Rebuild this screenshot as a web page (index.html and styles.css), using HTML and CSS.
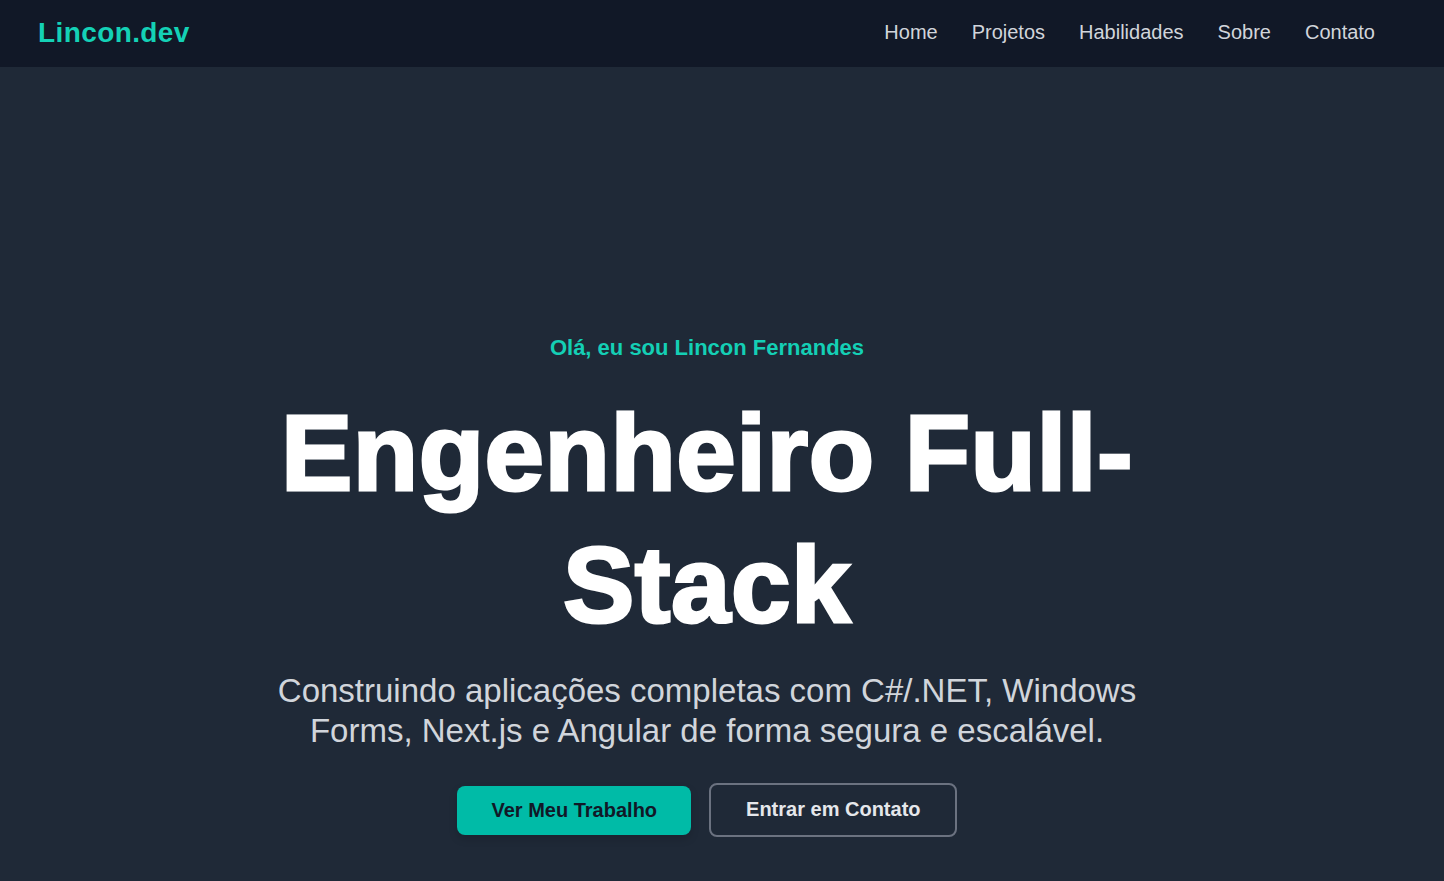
FILE: index.html
```html
<!DOCTYPE html>
<html lang="pt-BR">
<head>
<meta charset="utf-8">
<title>Lincon.dev</title>
<link rel="stylesheet" href="styles.css">
</head>
<body>
<header class="navbar">
  <a class="logo" href="#">Lincon.dev</a>
  <nav class="nav-links">
    <a href="#">Home</a>
    <a href="#">Projetos</a>
    <a href="#">Habilidades</a>
    <a href="#">Sobre</a>
    <a href="#">Contato</a>
  </nav>
</header>
<main class="hero">
  <div class="hero-inner">
    <p class="hello">Olá, eu sou Lincon Fernandes</p>
    <h1 class="title">Engenheiro Full-Stack</h1>
    <p class="lead">Construindo aplicações completas com C#/.NET, Windows Forms, Next.js e Angular de forma segura e escalável.</p>
    <div class="actions">
      <a class="btn btn-primary" href="#">Ver Meu Trabalho</a>
      <a class="btn btn-outline" href="#">Entrar em Contato</a>
    </div>
  </div>
</main>
</body>
</html>
```

FILE: styles.css
```css
* { box-sizing: border-box; }
html, body { margin: 0; padding: 0; }
body {
  background: #1f2937;
  font-family: "Liberation Sans", Arial, sans-serif;
  color: #ffffff;
  min-height: 881px;
}
a { text-decoration: none; }

.navbar {
  height: 67px;
  background: #111827;
  display: flex;
  align-items: center;
  justify-content: space-between;
  padding: 0 69px 0 38px;
}
.logo {
  color: #14d1b6;
  font-weight: 700;
  font-size: 28px;
  letter-spacing: 0.4px;
  line-height: 1;
  margin-top: -2px;
}
.nav-links {
  display: flex;
  gap: 34px;
  margin-top: -4px;
}
.nav-links a {
  color: #d1d5db;
  font-size: 20px;
  line-height: 1;
}

.hero {
  display: flex;
  justify-content: center;
  padding: 265px 30px 0 0;
}
.hero-inner {
  display: flex;
  flex-direction: column;
  align-items: center;
  text-align: center;
}
.hello {
  margin: 0;
  color: #14cfb5;
  font-weight: 700;
  font-size: 22px;
  line-height: 32px;
}
.title {
  margin: 23px 0 0;
  font-size: 107px;
  line-height: 132px;
  font-weight: 700;
  color: #ffffff;
  -webkit-text-stroke: 3px #ffffff;
  letter-spacing: 0.5px;
  width: 900px;
}
.lead {
  margin: 20px 0 0;
  max-width: 900px;
  color: #d1d5db;
  font-size: 33px;
  line-height: 40px;
}
.actions {
  margin-top: 32px;
  display: flex;
  align-items: center;
  gap: 18px;
}
.btn {
  font-weight: 700;
  font-size: 20px;
  line-height: 24px;
  border-radius: 8px;
}
.btn-primary {
  background: #00bba7;
  color: #111827;
  padding: 12px 34px 13px;
  box-shadow: 0 4px 8px rgba(0,0,0,0.15);
}
.btn-outline {
  color: #e5e7eb;
  border: 2px solid #6b7280;
  padding: 12px 34px 14px 35px;
}
```
